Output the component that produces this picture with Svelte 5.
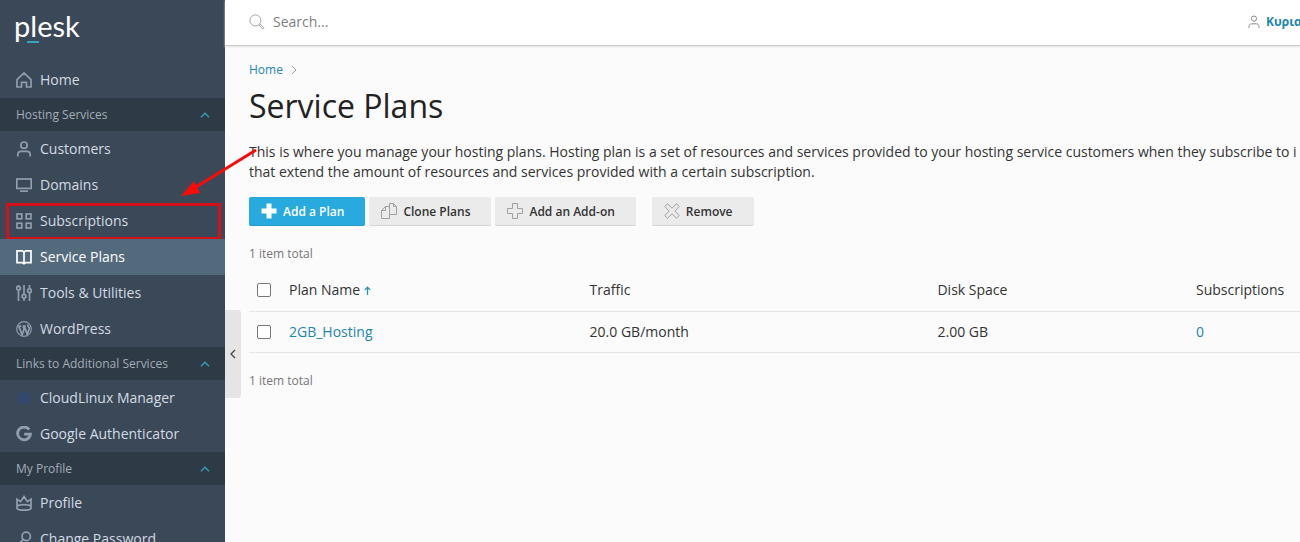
<script lang="ts">
	type NavItem = { label: string; icon: string; active?: boolean; marked?: boolean };
	type NavSection = { title: string | null; items: NavItem[] };

	const sections: NavSection[] = [
		{ title: null, items: [{ label: 'Home', icon: 'home' }] },
		{
			title: 'Hosting Services',
			items: [
				{ label: 'Customers', icon: 'user' },
				{ label: 'Domains', icon: 'screen' },
				{ label: 'Subscriptions', icon: 'grid', marked: true },
				{ label: 'Service Plans', icon: 'book', active: true },
				{ label: 'Tools & Utilities', icon: 'sliders' },
				{ label: 'WordPress', icon: 'wordpress' }
			]
		},
		{
			title: 'Links to Additional Services',
			items: [
				{ label: 'CloudLinux Manager', icon: 'cloudlinux' },
				{ label: 'Google Authenticator', icon: 'google' }
			]
		},
		{
			title: 'My Profile',
			items: [
				{ label: 'Profile', icon: 'crown' },
				{ label: 'Change Password', icon: 'key' }
			]
		}
	];

	const plans = [
		{ name: '2GB_Hosting', traffic: '20.0 GB/month', disk: '2.00 GB', subscriptions: 0 }
	];

	let collapsed = $state<Record<string, boolean>>({});
	let selected = $state(plans.map(() => false));
	let search = $state('');

	let allSelected = $derived(selected.every(Boolean));

	function toggleSection(title: string) {
		collapsed[title] = !collapsed[title];
	}

	function toggleAll() {
		const value = !allSelected;
		selected = plans.map(() => value);
	}
</script>

{#snippet icon(name: string)}
	<svg class="icon" viewBox="0 0 16 16" aria-hidden="true">
		{#if name === 'home'}
			<path d="M1 7.6 8 1l7 6.6V15h-4.5v-4.6h-5V15H1z" />
		{:else if name === 'user'}
			<circle cx="8" cy="4.2" r="3.2" />
			<path d="M1.8 15.5v-1.7c0-2.2 1.4-3.4 3.4-3.4h5.6c2 0 3.4 1.2 3.4 3.4v1.7" />
		{:else if name === 'screen'}
			<rect x="0.8" y="2" width="14.4" height="9.4" />
			<path d="M4 14.2h8" />
		{:else if name === 'grid'}
			<rect x="1" y="1" width="4.8" height="4.8" />
			<rect x="10.2" y="1" width="4.8" height="4.8" />
			<rect x="1" y="10.2" width="4.8" height="4.8" />
			<rect x="10.2" y="10.2" width="4.8" height="4.8" />
		{:else if name === 'book'}
			<path d="M1 1.8h5.2L8 3l1.8-1.2H15v11.8H9.8L8 14.8l-1.8-1.2H1zM8 3v11.5" />
		{:else if name === 'sliders'}
			<path d="M2.5 0v1M2.5 5.4V16M8 0v9.2M8 13.4V16M13.5 0v3.6M13.5 8V16" />
			<circle cx="2.5" cy="3.2" r="1.9" />
			<circle cx="8" cy="11.3" r="1.9" />
			<circle cx="13.5" cy="5.8" r="1.9" />
		{:else if name === 'wordpress'}
			<circle cx="8" cy="8" r="7.3" class="thin" />
			<path d="M2.2 5.2h3M6.6 5.2h3.2M2.9 5.4l3.2 8.4 2-6-1-2.6M8.3 5.4l3 8 1.9-5.6c.4-1.6-1.9-2.2-1.2-4.2" />
		{:else if name === 'cloudlinux'}
			<path class="cloud" d="M3 2.5h5L10 1l4.5 1v5.5L15 10l-2 4H4l-3-2V6z" />
		{:else if name === 'google'}
			<path class="bold" d="M13.2 3.6A6.4 6.4 0 1 0 14.4 8.2H8.2" />
		{:else if name === 'crown'}
			<path d="M1 4.2v9.2c1.6 2.2 12.4 2.2 14 0V4.2l-3.6 2.4L8 1.6 4.6 6.6zM1.4 11c2.2-1.8 11-1.8 13.2 0" />
		{:else if name === 'key'}
			<circle cx="10.2" cy="5.4" r="4.2" />
			<path d="M7.2 8.4 1.4 14.2V16M3 13l2 2" />
		{/if}
	</svg>
{/snippet}

<div class="page">
	<aside class="sidebar">
		<a class="logo" href="#home">p<span class="logo-mark">l</span>esk</a>

		<nav>
			{#each sections as section}
				{#if section.title}
					{@const title = section.title}
					<button class="section-title" onclick={() => toggleSection(title)}>
						<span>{title}</span>
						<svg class="chevron" class:down={collapsed[title]} viewBox="0 0 10 6" aria-hidden="true">
							<path d="M1 5.2 5 1.2l4 4" />
						</svg>
					</button>
				{/if}
				{#if !section.title || !collapsed[section.title]}
					{#each section.items as item}
						<a
							class="nav-item"
							class:active={item.active}
							class:marked={item.marked}
							href="#{item.icon}"
						>
							{@render icon(item.icon)}
							<span>{item.label}</span>
						</a>
					{/each}
				{/if}
			{/each}
		</nav>
	</aside>

	<div class="body">
		<header class="topbar">
			<label class="search">
				<svg class="search-icon" viewBox="0 0 18 18" aria-hidden="true">
					<circle cx="7.2" cy="7.2" r="6.2" />
					<path d="m11.6 12.6 1-1 4 3.4c.8.8-.8 2.2-1.6 1.6z" />
				</svg>
				<input type="text" placeholder="Search..." aria-label="Search" bind:value={search} />
			</label>
			<a class="account" href="#account">
				<svg viewBox="0 0 12 14" aria-hidden="true">
					<circle cx="6" cy="3.6" r="2.6" />
					<path d="M1 13v-1.4c0-1.8 1-2.8 2.8-2.8h4.4c1.8 0 2.8 1 2.8 2.8V13" />
				</svg>
				<span>Κυρια</span>
			</a>
		</header>

		<main>
			<div class="breadcrumb">
				<a href="#home">Home</a>
				<svg viewBox="0 0 6 10" aria-hidden="true"><path d="m1 1 4 4-4 4" /></svg>
			</div>
			<h1>Service Plans</h1>
			<p class="intro">
				This is where you manage your hosting plans. Hosting plan is a set of resources and services provided to your hosting service customers when they subscribe to i<br />
				that extend the amount of resources and services provided with a certain subscription.
			</p>

			<div class="toolbar">
				<button class="btn primary">
					<svg viewBox="0 0 16 16" aria-hidden="true">
						<path d="M5.5.5h5v5h5v5h-5v5h-5v-5h-5v-5h5z" />
					</svg>
					Add a Plan
				</button>
				<button class="btn">
					<svg viewBox="0 0 16 16" aria-hidden="true">
						<path d="M8.5.5h4l3 3v8h-7zM12.5.5v3h3M8.5 3.5h-4l-4 4v8h8v-4M.5 7.5h4v-4" />
					</svg>
					Clone Plans
				</button>
				<button class="btn">
					<svg viewBox="0 0 16 16" aria-hidden="true">
						<path d="M5.5.5h5v5h5v5h-5v5h-5v-5h-5v-5h5z" />
					</svg>
					Add an Add-on
				</button>
				<button class="btn separate">
					<svg viewBox="0 0 16 16" aria-hidden="true">
						<path d="M3.5.8 8 5.2 12.5.8l2.7 2.7L10.8 8l4.4 4.5-2.7 2.7L8 10.8l-4.5 4.4L.8 12.5 5.2 8 .8 3.5z" />
					</svg>
					Remove
				</button>
			</div>

			<p class="total">{plans.length} item total</p>
			<table>
				<colgroup>
					<col class="col-check" />
					<col class="col-name" />
					<col class="col-traffic" />
					<col class="col-disk" />
					<col />
				</colgroup>
				<thead>
					<tr>
						<th class="check">
							<input type="checkbox" aria-label="Select all" checked={allSelected} onchange={toggleAll} />
						</th>
						<th>
							Plan Name
							<svg class="sort" viewBox="0 0 7 9" aria-hidden="true">
								<path d="M3.5 9V1.2M.8 3.9l2.7-2.7 2.7 2.7" />
							</svg>
						</th>
						<th>Traffic</th>
						<th>Disk Space</th>
						<th>Subscriptions</th>
					</tr>
				</thead>
				<tbody>
					{#each plans as plan, i}
						<tr>
							<td class="check">
								<input type="checkbox" aria-label="Select {plan.name}" bind:checked={selected[i]} />
							</td>
							<td><a href="#plan">{plan.name}</a></td>
							<td>{plan.traffic}</td>
							<td>{plan.disk}</td>
							<td><a href="#subscriptions">{plan.subscriptions}</a></td>
						</tr>
					{/each}
				</tbody>
			</table>
			<p class="total">{plans.length} item total</p>
		</main>
	</div>

	<button class="collapse" aria-label="Collapse sidebar">
		<svg viewBox="0 0 6 10" aria-hidden="true"><path d="M5 1 1 5l4 4" /></svg>
	</button>

	<!-- Pointer to the marked menu item -->
	<svg class="pointer" viewBox="0 0 80 50" aria-hidden="true">
		<path class="shaft" d="M76 2 16 39" />
		<path class="head" d="M1 48 14 33l6 12z" />
	</svg>
</div>

<style>
	:global(body) {
		margin: 0;
	}

	.page {
		position: relative;
		display: flex;
		height: 100vh;
		overflow: hidden;
		background: #fbfbfb;
		color: #333;
		font-family: 'Open Sans', 'Noto Sans', sans-serif;
		font-size: 14px;
		line-height: 20px;
	}

	a {
		color: #2285ab;
		text-decoration: none;
	}

	button {
		border: 0;
		font-family: inherit;
		cursor: pointer;
	}

	svg {
		flex: none;
		fill: none;
		stroke: currentColor;
	}

	.sidebar {
		flex: none;
		width: 225px;
		background: #3a4858;
	}

	.logo {
		display: block;
		height: 46px;
		padding: 8px 14px;
		color: #fff;
		font-family: Lato, sans-serif;
		font-size: 29px;
		line-height: 36px;
	}

	.logo-mark {
		position: relative;
	}

	.logo-mark::after {
		content: '';
		position: absolute;
		left: -3px;
		bottom: 0;
		width: 12px;
		height: 2px;
		background: #3aa5bd;
	}

	.nav-item {
		position: relative;
		display: flex;
		align-items: center;
		gap: 8px;
		height: 36px;
		padding: 0 16px;
		color: #d4dbe3;
	}

	.nav-item.active {
		background: #536a7c;
		color: #fff;
	}

	.nav-item.marked::after {
		content: '';
		position: absolute;
		inset: 0 4px -1px 6px;
		border: 3px solid #d4111b;
	}

	.icon {
		width: 16px;
		height: 16px;
		color: #919eac;
		stroke-width: 1.7;
	}

	.active .icon {
		color: #fff;
	}

	.icon .thin {
		stroke-width: 1.2;
	}

	.icon .bold {
		stroke-width: 2.8;
	}

	.icon .cloud {
		fill: #33496b;
		stroke: none;
	}

	.section-title {
		display: flex;
		align-items: center;
		justify-content: space-between;
		width: 100%;
		height: 33px;
		padding: 0 15px 0 16px;
		background: #2e3a46;
		color: #a3adb7;
		font-size: 12px;
	}

	.chevron {
		width: 10px;
		height: 6px;
		color: #35a0c0;
		stroke-width: 1.3;
	}

	.chevron.down {
		transform: rotate(180deg);
	}

	.body {
		flex: 1;
		min-width: 0;
	}

	.topbar {
		display: flex;
		align-items: center;
		justify-content: space-between;
		height: 43px;
		padding: 0 0 2px 24px;
		border-bottom: 1px solid #c9c9c9;
		background: #fff;
		box-shadow: 0 1px 2px #e2e2e2;
	}

	.search {
		display: flex;
		flex: 1;
		align-items: center;
		gap: 8px;
		color: #999;
	}

	.search-icon {
		width: 16px;
		height: 16px;
	}

	.search input {
		flex: 1;
		padding: 0;
		border: 0;
		outline: 0;
		background: none;
		color: #333;
		font: inherit;
	}

	.search input::placeholder {
		color: #808080;
		opacity: 1;
	}

	.account {
		display: flex;
		align-items: center;
		gap: 6px;
		width: 52px;
		overflow: hidden;
		font-size: 12px;
		font-weight: 700;
		white-space: nowrap;
	}

	.account svg {
		width: 12px;
		height: 14px;
		color: #8a8a8a;
	}

	main {
		padding: 14px 0 0 24px;
	}

	.breadcrumb {
		display: flex;
		align-items: center;
		gap: 8px;
		font-size: 12px;
	}

	.breadcrumb svg {
		width: 6px;
		height: 10px;
		color: #999;
	}

	h1 {
		margin: 6px 0 16px;
		color: #222;
		font-size: 32px;
		font-weight: 400;
		line-height: 40px;
	}

	p {
		margin: 0;
	}

	.intro {
		overflow: hidden;
		white-space: nowrap;
	}

	.toolbar {
		display: flex;
		gap: 4px;
		margin: 15px 0 18px;
	}

	.btn {
		display: flex;
		align-items: center;
		gap: 6px;
		height: 29px;
		padding: 0 21px 0 12px;
		border-bottom: 1px solid #d5d5d5;
		border-radius: 2px;
		background: #ebebeb;
		color: #333;
		font-size: 12px;
		font-weight: 600;
	}

	.btn svg {
		width: 16px;
		height: 16px;
		color: #a0a0a0;
	}

	.btn.primary {
		border-color: #2499c8;
		background: #28aade;
		color: #fff;
	}

	.primary svg {
		fill: #fff;
		stroke: none;
	}

	.btn.separate {
		margin-left: 12px;
	}

	.total {
		color: #777;
		font-size: 12px;
	}

	table {
		width: 100%;
		margin: 6px 0 18px;
		border-collapse: collapse;
		table-layout: fixed;
	}

	.col-check {
		width: 32px;
	}

	.col-name {
		width: 28.6%;
	}

	.col-traffic {
		width: 33.1%;
	}

	.col-disk {
		width: 24.6%;
	}

	th,
	td {
		height: 41px;
		box-sizing: border-box;
		padding: 0 8px;
		border-bottom: 1px solid #e6e6e6;
		font-weight: 400;
		text-align: left;
		white-space: nowrap;
	}

	th.check,
	td.check {
		padding-right: 0;
	}

	input[type='checkbox'] {
		display: block;
		width: 14px;
		height: 14px;
		margin: 0;
		border: 1px solid #777;
		border-radius: 2px;
		background: #fff;
		appearance: none;
	}

	input[type='checkbox']:checked {
		background: #28aade;
	}

	.sort {
		width: 7px;
		height: 9px;
		color: #2b93bb;
		stroke-width: 1.3;
	}

	.collapse {
		position: absolute;
		top: 310px;
		left: 225px;
		display: flex;
		align-items: center;
		justify-content: center;
		width: 16px;
		height: 88px;
		padding: 0;
		border-radius: 0 3px 3px 0;
		background: #e6e5e6;
		color: #444;
	}

	.collapse svg {
		width: 6px;
		height: 10px;
		stroke-width: 1.3;
	}

	.pointer {
		position: absolute;
		top: 148px;
		left: 180px;
		width: 80px;
		height: 50px;
		color: #fb0a0a;
		pointer-events: none;
	}

	.pointer .shaft {
		stroke-width: 3;
	}

	.pointer .head {
		fill: currentColor;
		stroke: none;
	}
</style>
